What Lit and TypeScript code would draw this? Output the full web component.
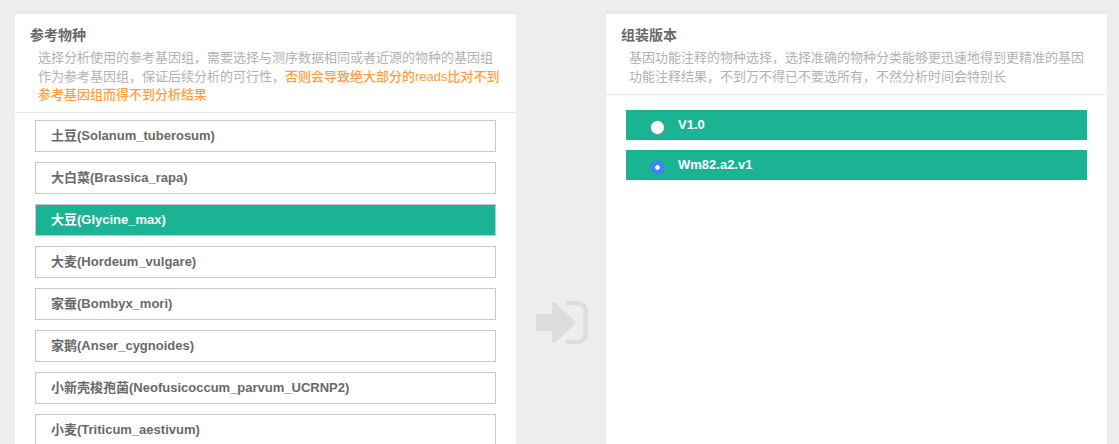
import { LitElement, css, html } from "lit";
import { customElement, state } from "lit/decorators.js";

const SPECIES = [
  "土豆(Solanum_tuberosum)",
  "大白菜(Brassica_rapa)",
  "大豆(Glycine_max)",
  "大麦(Hordeum_vulgare)",
  "家蚕(Bombyx_mori)",
  "家鹅(Anser_cygnoides)",
  "小新壳梭孢菌(Neofusicoccum_parvum_UCRNP2)",
  "小麦(Triticum_aestivum)",
];
const VERSIONS = ["V1.0", "Wm82.a2.v1"];

@customElement("app-root")
export class AppRoot extends LitElement {
  @state() species = "大豆(Glycine_max)";
  @state() version = "Wm82.a2.v1";

  static styles = css`
    :host {
      display: flex;
      width: 1119px;
      height: 444px;
      box-sizing: border-box;
      padding: 11px 12px 0 15px;
      overflow: hidden;
      background: #eeeeee;
      font-family: "Liberation Sans", "Noto Sans CJK SC", sans-serif;
      -webkit-font-smoothing: antialiased;
    }
    .panel {
      width: 501px;
      flex: none;
      height: 480px;
      background: #fff;
      border-top: 3px solid #e7eaec;
      box-sizing: border-box;
    }
    .head {
      box-sizing: border-box;
      padding: 13px 15px 0;
      border-bottom: 1px solid #e7eaec;
    }
    .left .head { height: 99px; }
    .right .head { height: 81px; }
    .title {
      font-size: 14px;
      line-height: 16px;
      font-weight: 700;
      color: #676a6c;
    }
    .desc {
      margin: 6px 0 0 8px;
      font-size: 13px;
      line-height: 18.5px;
      color: #b2b2b2;
    }
    .warn {
      color: #ffa03c;
      font-weight: 500;
    }
    .list {
      display: flex;
      flex-direction: column;
      gap: 10px;
      padding: 7px 20px 0;
    }
    .item {
      box-sizing: border-box;
      height: 32px;
      padding-left: 15px;
      border: 1px solid #c8c8c8;
      background: #fff;
      color: #676a6c;
      font: 700 13px/29px "Liberation Sans", "Noto Sans CJK SC", sans-serif;
      text-align: left;
      cursor: pointer;
    }
    .item.on {
      background: #1ab394;
      color: #fff;
    }
    .versions {
      display: flex;
      flex-direction: column;
      gap: 10px;
      padding: 15px 20px 0;
    }
    .version {
      display: flex;
      height: 30px;
      padding-left: 25px;
      background: #1ab394;
      color: #fff;
      font-size: 13px;
      font-weight: 700;
      line-height: 29px;
      cursor: pointer;
    }
    input {
      appearance: none;
      flex: none;
      width: 13px;
      height: 13px;
      margin: 11px 14px 0 0;
      border-radius: 50%;
      background: #fff;
      box-shadow: 0 0 0 0.5px #9a9a9a;
    }
    input:checked {
      background: radial-gradient(circle, #fff 0 2px, #3a86f7 2.6px);
      box-shadow: 0 0 0 0.5px #3478e5;
    }
    .mid {
      flex: none;
      width: 90px;
      display: flex;
      justify-content: center;
      align-items: flex-start;
      padding: 290px 0 0 2px;
      box-sizing: border-box;
    }
    svg {
      display: block;
      width: 52px;
      height: 43px;
      fill: #dddddd;
    }
  `;

  render() {
    return html`
      <section class="panel left">
        <div class="head">
          <div class="title">参考物种</div>
          <div class="desc">
            选择分析使用的参考基因组，需要选择与测序数据相同或者近源的物种的基因组作为参考基因组，保证后续分析的可行性，<span class="warn">否则会导致绝大部分的reads比对不到参考基因组而得不到分析结果</span>
          </div>
        </div>
        <div class="list">
          ${SPECIES.map(
            (s) => html`<div class="item ${s === this.species ? "on" : ""}" @click=${() => (this.species = s)}>${s}</div>`
          )}
        </div>
      </section>
      <div class="mid">
        <svg viewBox="64 256 1472 1280" preserveAspectRatio="none" aria-hidden="true">
          <path d="M1184 896q0 26-19 45l-544 544q-19 19-45 19t-45-19-19-45v-288h-448q-26 0-45-19t-19-45v-384q0-26 19-45t45-19h448v-288q0-26 19-45t45-19 45 19l544 544q19 19 19 45zm352-352v704q0 119-84.5 203.5t-203.5 84.5h-320q-13 0-22.5-9.5t-9.5-22.5q0-4-1-20t-.5-26.5 3-23.5 10-19.5 20.5-6.5h320q66 0 113-47t47-113v-704q0-66-47-113t-113-47h-312l-11.5-1-11.5-3-8-5.5-7-9-2-13.5q0-4-1-20t-.5-26.5 3-23.5 10-19.5 20.5-6.5h320q119 0 203.5 84.5t84.5 203.5z" />
        </svg>
      </div>
      <section class="panel right">
        <div class="head">
          <div class="title">组装版本</div>
          <div class="desc">基因功能注释的物种选择，选择准确的物种分类能够更迅速地得到更精准的基因功能注释结果，不到万不得已不要选所有，不然分析时间会特别长</div>
        </div>
        <div class="versions">
          ${VERSIONS.map(
            (v) => html`<label class="version">
              <input type="radio" name="version" .checked=${v === this.version} @change=${() => (this.version = v)} />
              <span>${v}</span>
            </label>`
          )}
        </div>
      </section>
    `;
  }
}
